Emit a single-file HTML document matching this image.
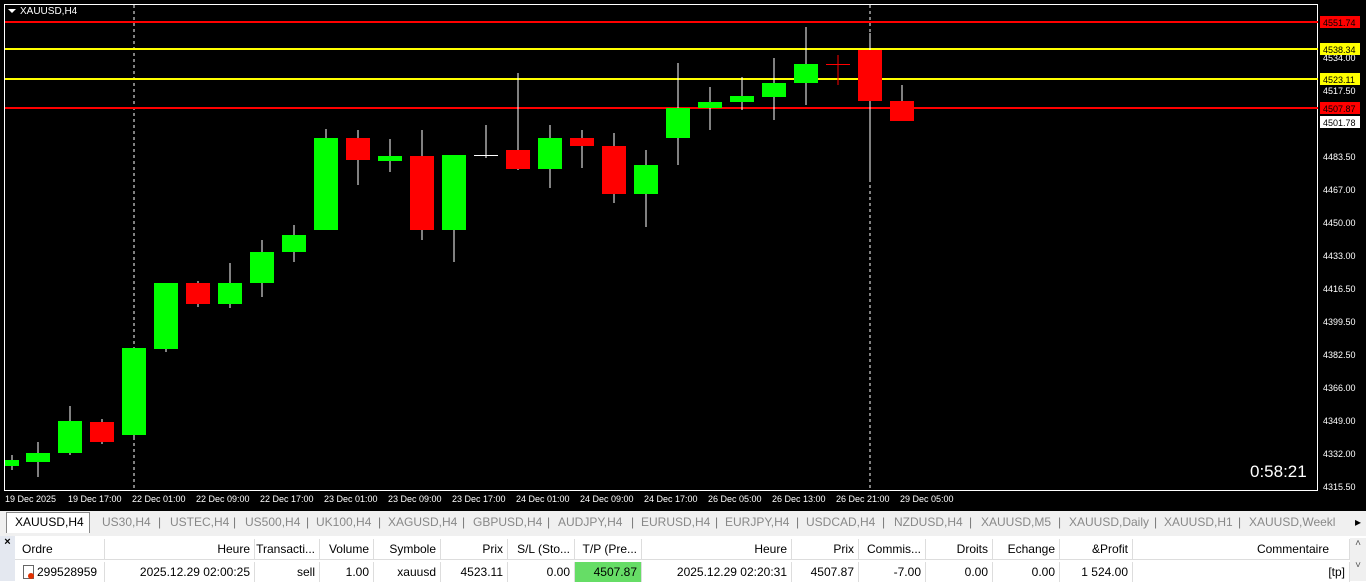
<!DOCTYPE html><html><head><style>
body{margin:0;width:1366px;height:581px;overflow:hidden;background:#fff;font-family:"Liberation Sans",sans-serif;position:relative}
.tabs{position:absolute;top:511px;left:0;width:1366px;height:22px;background:#f0f0f0;font-size:12px;color:#888}
.tabs span{position:absolute;top:4px}
.tabs i{position:absolute;top:4px;font-style:normal;color:#777}
.tbl{position:absolute;top:536px;left:0;width:1366px;height:45px;background:#fff;font-size:12px;color:#000}
.c{position:absolute;height:20px;line-height:20px;text-align:right;border-right:1px solid #ddd;box-sizing:border-box;padding-right:4px}
</style></head><body>
<svg width="1366" height="511" style="position:absolute;top:0;left:0" font-family="Liberation Sans" font-size="9.5">
<rect width="1366" height="511" fill="#000"/>
<rect x="4.5" y="4.5" width="1313" height="486" fill="none" stroke="#fff"/>
<g stroke="#fff" stroke-dasharray="3,3"><line x1="134" y1="5" x2="134" y2="490"/><line x1="870" y1="5" x2="870" y2="490"/></g>
<g stroke-width="2"><line x1="5" y1="22" x2="1318" y2="22" stroke="#f00"/><line x1="5" y1="49" x2="1318" y2="49" stroke="#ff0"/><line x1="5" y1="79" x2="1318" y2="79" stroke="#ff0"/><line x1="5" y1="108" x2="1318" y2="108" stroke="#f00"/></g>
<g id="c"></g>
<g fill="#fff"><path d="M8 9h8l-4 4z"/><text x="20" y="14" font-size="10">XAUUSD,H4</text>
<text x="1250" y="477" font-size="17">0:58:21</text></g>
<g fill="#fff" font-size="9">
<text x="1323" y="61">4534.00</text><text x="1323" y="94">4517.50</text><text x="1323" y="160">4483.50</text><text x="1323" y="193">4467.00</text><text x="1323" y="226">4450.00</text><text x="1323" y="259">4433.00</text><text x="1323" y="292">4416.50</text><text x="1323" y="325">4399.50</text><text x="1323" y="358">4382.50</text><text x="1323" y="391">4366.00</text><text x="1323" y="424">4349.00</text><text x="1323" y="457">4332.00</text><text x="1323" y="490">4315.50</text>
</g>
<rect x="1320" y="16" width="40" height="12" fill="#f00"/><text x="1323" y="26" font-size="9">4551.74</text>
<rect x="1320" y="43" width="40" height="12" fill="#ff0"/><text x="1323" y="53" font-size="9">4538.34</text>
<rect x="1320" y="73" width="40" height="12" fill="#ff0"/><text x="1323" y="83" font-size="9">4523.11</text>
<rect x="1320" y="102" width="40" height="12" fill="#f00"/><text x="1323" y="112" font-size="9">4507.87</text>
<rect x="1320" y="116" width="40" height="12" fill="#fff"/><text x="1323" y="126" font-size="9">4501.78</text>
<g fill="#fff" font-size="9">
<text x="5" y="502">19 Dec 2025</text><text x="68" y="502">19 Dec 17:00</text><text x="132" y="502">22 Dec 01:00</text><text x="196" y="502">22 Dec 09:00</text><text x="260" y="502">22 Dec 17:00</text><text x="324" y="502">23 Dec 01:00</text><text x="388" y="502">23 Dec 09:00</text><text x="452" y="502">23 Dec 17:00</text><text x="516" y="502">24 Dec 01:00</text><text x="580" y="502">24 Dec 09:00</text><text x="644" y="502">24 Dec 17:00</text><text x="708" y="502">26 Dec 05:00</text><text x="772" y="502">26 Dec 13:00</text><text x="836" y="502">26 Dec 21:00</text><text x="900" y="502">29 Dec 05:00</text>
</g>
</svg>
<script>
var d=[[12,1,460,466,455,470],[38,1,453,462,442,477],[70,1,421,453,406,455],[102,0,422,442,419,444],[134,1,348,435,348,440],[166,1,283,349,283,352],[198,0,283,304,281,307],[230,1,283,304,263,308],[262,1,252,283,240,297],[294,1,235,252,225,262],[326,1,138,230,129,230],[358,0,138,160,130,185],[390,1,156,161,139,172],[422,0,156,230,130,240],[454,1,155,230,155,262],[486,2,155,156,125,158],[518,0,150,169,73,170],[550,1,138,169,125,188],[582,0,138,146,130,168],[614,0,146,194,133,203],[646,1,165,194,150,227],[678,1,108,138,63,165],[710,1,102,108,87,130],[742,1,96,102,77,110],[774,1,83,97,58,120],[806,1,64,83,27,105],[838,3,64,65,55,85],[870,0,50,101,33,180],[902,0,101,121,85,121]];
var s='';d.forEach(function(a){var col=a[1]==1?'#0f0':a[1]==0?'#f00':a[1]==3?'#f00':'#fff';
s+='<line x1="'+a[0]+'" y1="'+a[4]+'" x2="'+a[0]+'" y2="'+a[5]+'" stroke="'+(a[1]==3?'#f00':'#fff')+'"/>';
var w=a[0]==12?14:24;var x=a[0]==12?5:a[0]-12;
s+='<rect x="'+x+'" y="'+a[2]+'" width="'+w+'" height="'+Math.max(1,a[3]-a[2])+'" fill="'+col+'"/>';});
document.getElementById('c').innerHTML=s;
</script>
<div class="tabs">
<div style="position:absolute;left:6px;top:1px;width:82px;height:20px;background:#fff;border:1px solid #888;border-bottom:none"></div>
<span style="left:15px;color:#000">XAUUSD,H4</span><span style="left:102px">US30,H4</span><span style="left:170px">USTEC,H4</span><span style="left:245px">US500,H4</span><span style="left:316px">UK100,H4</span><span style="left:388px">XAGUSD,H4</span><span style="left:473px">GBPUSD,H4</span><span style="left:558px">AUDJPY,H4</span><span style="left:641px">EURUSD,H4</span><span style="left:725px">EURJPY,H4</span><span style="left:806px">USDCAD,H4</span><span style="left:894px">NZDUSD,H4</span><span style="left:981px">XAUUSD,M5</span><span style="left:1069px">XAUUSD,Daily</span><span style="left:1164px">XAUUSD,H1</span><span style="left:1249px">XAUUSD,Weekl</span><span style="left:1355px;color:#000">▸</span>
<i style="left:158px">|</i><i style="left:233px">|</i><i style="left:306px">|</i><i style="left:378px">|</i><i style="left:462px">|</i><i style="left:547px">|</i><i style="left:631px">|</i><i style="left:715px">|</i><i style="left:796px">|</i><i style="left:882px">|</i><i style="left:969px">|</i><i style="left:1058px">|</i><i style="left:1154px">|</i><i style="left:1238px">|</i>
</div>
<div style="position:absolute;top:533px;left:0;width:1366px;height:3px;background:#f0f0f0"></div>
<div class="tbl">
<div style="position:absolute;left:0;top:0;width:15px;height:45px;background:#e4e8f0;font-size:11px;font-weight:bold;text-align:center">×</div>
<div style="position:absolute;left:15px;top:2px;width:1335px;height:21px;border-bottom:1px solid #ddd"></div>
<div class="c" style="left:15px;top:3px;width:90px;text-align:left;padding-left:7px">Ordre</div>
<div class="c" style="left:105px;top:3px;width:150px">Heure</div>
<div class="c" style="left:255px;top:3px;width:65px">Transacti...</div>
<div class="c" style="left:320px;top:3px;width:54px">Volume</div>
<div class="c" style="left:374px;top:3px;width:67px">Symbole</div>
<div class="c" style="left:441px;top:3px;width:67px">Prix</div>
<div class="c" style="left:508px;top:3px;width:67px">S/L (Sto...</div>
<div class="c" style="left:575px;top:3px;width:67px">T/P (Pre...</div>
<div class="c" style="left:642px;top:3px;width:150px">Heure</div>
<div class="c" style="left:792px;top:3px;width:67px">Prix</div>
<div class="c" style="left:859px;top:3px;width:67px">Commis...</div>
<div class="c" style="left:926px;top:3px;width:67px">Droits</div>
<div class="c" style="left:993px;top:3px;width:67px">Echange</div>
<div class="c" style="left:1060px;top:3px;width:73px">&amp;Profit</div>
<div class="c" style="left:1133px;top:3px;width:217px;padding-right:20px">Commentaire</div>
<div class="c" style="left:15px;top:26px;width:90px;text-align:left;padding-left:22px">299528959</div>
<div style="position:absolute;left:23px;top:29px;width:9px;height:12px;border:1px solid #666;background:#fff"></div><div style="position:absolute;left:28px;top:37px;width:6px;height:6px;border-radius:50%;background:#e03000"></div>
<div class="c" style="left:105px;top:26px;width:150px">2025.12.29 02:00:25</div>
<div class="c" style="left:255px;top:26px;width:65px">sell</div>
<div class="c" style="left:320px;top:26px;width:54px">1.00</div>
<div class="c" style="left:374px;top:26px;width:67px">xauusd</div>
<div class="c" style="left:441px;top:26px;width:67px">4523.11</div>
<div class="c" style="left:508px;top:26px;width:67px">0.00</div>
<div class="c" style="left:575px;top:26px;width:67px;background:#66dd66">4507.87</div>
<div class="c" style="left:642px;top:26px;width:150px">2025.12.29 02:20:31</div>
<div class="c" style="left:792px;top:26px;width:67px">4507.87</div>
<div class="c" style="left:859px;top:26px;width:67px">-7.00</div>
<div class="c" style="left:926px;top:26px;width:67px">0.00</div>
<div class="c" style="left:993px;top:26px;width:67px">0.00</div>
<div class="c" style="left:1060px;top:26px;width:73px">1 524.00</div>
<div class="c" style="left:1133px;top:26px;width:217px">[tp]</div>
<div style="position:absolute;left:1350px;top:2px;width:16px;height:43px;background:#f0f0f0;font-size:10px;text-align:center;color:#555">˄<br><br>˅</div>
</div>
</body></html>
